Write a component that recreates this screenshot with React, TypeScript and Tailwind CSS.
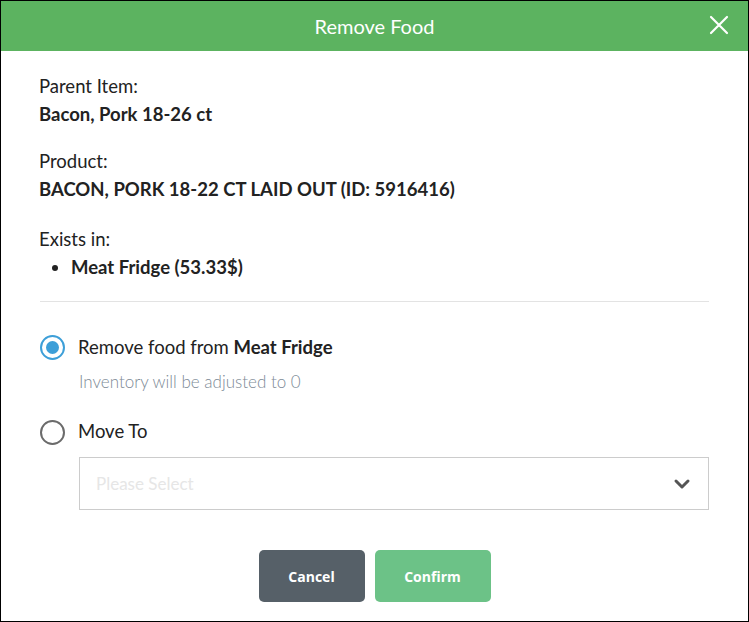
import { FiChevronDown } from "react-icons/fi";

function Radio({ checked }: { checked: boolean }) {
  return checked ? (
    <span className="flex h-[25px] w-[25px] shrink-0 items-center justify-center rounded-full border-[2.5px] border-[#3d9fd8]">
      <span className="h-[13px] w-[13px] rounded-full bg-[#3d9fd8]" />
    </span>
  ) : (
    <span className="h-[25px] w-[25px] shrink-0 rounded-full border-[2.5px] border-[#6b6b6b]" />
  );
}

export default function App() {
  return (
    <div className="flex h-[622px] w-[749px] flex-col overflow-hidden border border-black bg-white font-['Lato',sans-serif] text-[#222]">
      {/* header */}
      <div className="relative flex h-[50px] shrink-0 items-center justify-center bg-[#5cb360]">
        <h1 className="text-[20px] text-white">Remove Food</h1>
        <button className="absolute right-[19px] top-[14px] text-white">
          <svg width="20" height="20" viewBox="0 0 20 20" stroke="currentColor" strokeWidth="2.2" strokeLinecap="round">
            <path d="M2 2 L18 18 M18 2 L2 18" />
          </svg>
        </button>
      </div>

      <div className="flex flex-col px-[39px] pt-[21px]">
        <div className="text-[18.5px] leading-[28px]">
          <p className="-ml-px">Parent Item:</p>
          <p className="-ml-px font-bold">Bacon, Pork 18-26 ct</p>
        </div>
        <div className="mt-[19px] text-[18.5px] leading-[28px]">
          <p className="-ml-px">Product:</p>
          <p className="-ml-px font-bold">BACON, PORK 18-22 CT LAID OUT (ID: 5916416)</p>
        </div>
        <div className="mt-[22px] text-[18.5px] leading-[28px]">
          <p className="-ml-px">Exists in:</p>
          <ul className="list-disc pl-[31px] font-bold">
            <li>Meat Fridge (53.33$)</li>
          </ul>
        </div>

        <div className="mt-[20px] h-px bg-[#e3e3e3]" />

        <label className="mt-[32px] flex items-center gap-[13px] text-[18.5px]">
          <Radio checked />
          <span>
            Remove food from <b>Meat Fridge</b>
          </span>
        </label>
        <p className="mt-[7px] pl-[39px] text-[17px] font-light text-[#7d8a96]">
          Inventory will be adjusted to 0
        </p>

        <label className="mt-[24px] flex items-center gap-[13px] text-[18.5px]">
          <Radio checked={false} />
          <span>Move To</span>
        </label>

        <div className="ml-[39px] mt-[11px] flex h-[53px] items-center justify-between border border-[#cccccc] pl-[16px] pr-[14px]">
          <span className="text-[17px] text-[#e6e6e6]">Please Select</span>
          <FiChevronDown className="text-[#555]" size={24} strokeWidth={3} />
        </div>

        <div className="mt-[40px] flex justify-center gap-[10px] font-['Open_Sans',sans-serif] text-[14px] font-bold text-white">
          <button className="h-[52px] w-[106px] rounded-[5px] bg-[#566068]">Cancel</button>
          <button className="h-[52px] w-[116px] rounded-[5px] bg-[#6cc287]">Confirm</button>
        </div>
      </div>
    </div>
  );
}
